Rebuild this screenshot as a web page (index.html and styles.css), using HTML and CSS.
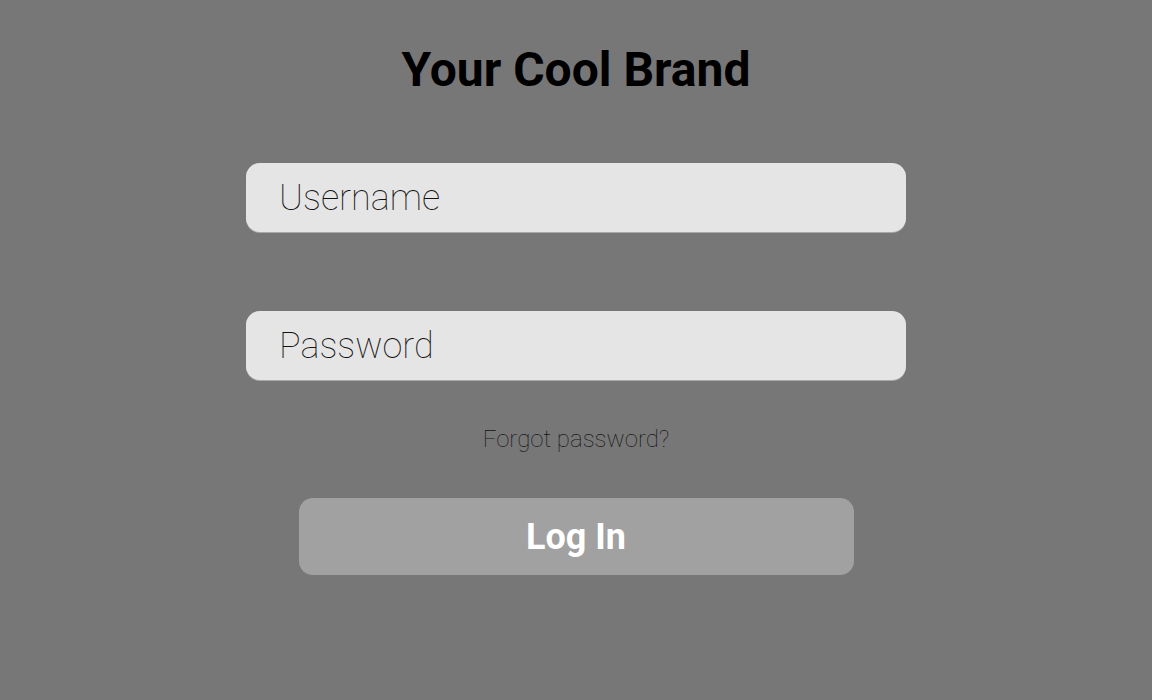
FILE: index.html
```html
<!DOCTYPE html>
<html lang="en">
<head>
    <meta charset="UTF-8">
    <meta name="viewport" content="width=device-width, initial-scale=1.0">
    <title>Log In</title>
    <link rel="stylesheet" href="styles.css">
</head>
<body>

    <div class="login">
        <h1 class="brand">Your Cool Brand</h1>
        <input class="field" type="text" placeholder="Username">
        <input class="field" type="password" placeholder="Password">
        <a class="forgot" href="#">Forgot password?</a>
        <button class="login-btn">Log In</button>
    </div>

</body>
</html>
```

FILE: styles.css
```css
body {
    font-family: Roboto, "Liberation Sans", sans-serif;
    background-color: #777777;
    margin: 0;
    height: 100vh;
}
.login {
    width: 660px;
    margin: 0 auto;
    display: flex;
    flex-direction: column;
    align-items: center;
}
.brand {
    margin: 40px 0 0;
    height: 60px;
    line-height: 60px;
    font-size: 48px;
    font-weight: 700;
    color: #000;
}
.field {
    box-sizing: border-box;
    width: 660px;
    height: 69px;
    margin-top: 63px;
    padding: 0 33px;
    border: none;
    border-radius: 14px;
    background: #e5e5e5;
    box-shadow: 0 1px 0 #a8a8a8;
    font-family: Roboto, "Liberation Sans", sans-serif;
    font-size: 36px;
    font-weight: 100;
    color: #111;
    outline: none;
}
.field + .field {
    margin-top: 79px;
}
.field::placeholder {
    color: #111;
}
.forgot {
    margin-top: 44px;
    font-size: 24px;
    font-weight: 100;
    color: #111;
    text-decoration: none;
    line-height: 30px;
}
.login-btn {
    margin-top: 44px;
    width: 555px;
    height: 77px;
    border: none;
    border-radius: 14px;
    background: #a1a1a1;
    color: #fff;
    font-family: Roboto, "Liberation Sans", sans-serif;
    font-size: 36px;
    font-weight: 700;
    cursor: pointer;
}
```
